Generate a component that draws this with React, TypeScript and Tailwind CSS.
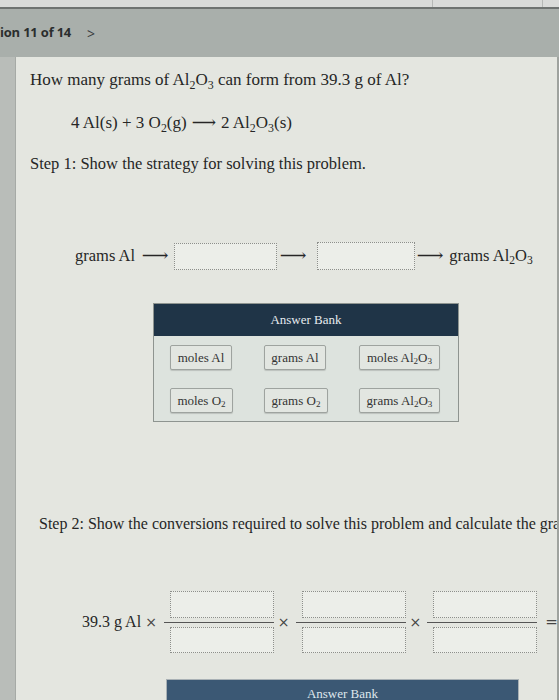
import React from 'react';

const serif = "font-['Liberation_Serif','Times_New_Roman','DejaVu_Serif',serif]";

const Sub = ({ children }: { children: React.ReactNode }) => (
  <sub className="text-[0.7em] relative top-[0.3em] bottom-auto align-baseline leading-none">{children}</sub>
);

const Arrow = ({ className = '' }: { className?: string }) => (
  <span className={`inline-block font-['DejaVu_Serif',serif] text-[17px] ${className}`}>⟶</span>
);

const DropBox = ({ className = '' }: { className?: string }) => (
  <div className={`flex-shrink-0 border border-dotted border-[#8d8f8b] bg-[#eceee9] ${className}`} />
);

const Chip = ({ children, className = '' }: { children: React.ReactNode; className?: string }) => (
  <div
    className={`h-[25px] flex items-center justify-center border border-[#9ea39f] rounded-[2px] bg-[#e2e6e1] shadow-[0_1px_1px_rgba(0,0,0,0.15)] text-[13px] text-[#333] whitespace-nowrap ${className}`}
  >
    <span>{children}</span>
  </div>
);

const Fraction = () => (
  <div className="w-[110px] flex-shrink-0 flex flex-col items-center">
    <DropBox className="w-[104px] h-[27px] ml-[6px]" />
    <div className="w-full h-[1.5px] bg-[#555] my-[4px]" />
    <DropBox className="w-[104px] h-[26px] ml-[6px]" />
  </div>
);

const Times = ({ className = '' }: { className?: string }) => (
  <span className={`flex-shrink-0 font-['DejaVu_Sans',sans-serif] text-[14px] text-[#444] ${className}`}>×</span>
);

export default function App() {
  return (
    <div className="w-[559px] h-[700px] overflow-hidden flex flex-col bg-[#c4c8c4]">
      {/* top strip */}
      <div className="h-[9px] flex-shrink-0 bg-[#d9dbd9] border-b-2 border-[#6e7371] flex">
        <div className="w-[433px] border-r border-[#b5b8b6]" />
        <div className="w-[110px] border-r border-[#b5b8b6]" />
      </div>

      {/* header */}
      <div className="h-[48px] flex-shrink-0 bg-[#a9afab] flex items-center font-['Open_Sans',sans-serif] text-[#2b2e2e]">
        <span className="text-[13px] font-bold tracking-[-0.2px] pb-[1px]">ion 11 of 14</span>
        <span className="ml-[16px] text-[14px] text-[#3a3d3d]">&gt;</span>
      </div>

      <div className="flex-1 flex min-h-0">
        <div className="w-[16px] flex-shrink-0 bg-[#b9bdb9] border-r border-[#a6aaa6]" />
        <div className={`flex-1 min-w-0 bg-[#e4e6e0] border-r-2 border-[#9ea29e] ${serif} text-[#262626] overflow-hidden`}>
          <div className="pl-[14px] pt-[11px]">
            <p className="text-[17px] leading-[24px]">
              How many grams of Al<Sub>2</Sub>O<Sub>3</Sub> can form from 39.3 g of Al?
            </p>
            <p className="ml-[41px] mt-[18px] text-[17px] leading-[24px]">
              4 Al(s) + 3 O<Sub>2</Sub>(g)
              <Arrow className="mx-[5px]" />2 Al<Sub>2</Sub>O<Sub>3</Sub>(s)
            </p>
            <p className="mt-[17px] text-[16.5px] leading-[24px]">Step 1: Show the strategy for solving this problem.</p>
          </div>

          {/* strategy row */}
          <div className="mt-[66px] flex items-center text-[16.5px] h-[28px] whitespace-nowrap">
            <span className="ml-[59px]">grams Al</span>
            <Arrow className="ml-[8px] scale-x-[1.1]" />
            <DropBox className="w-[103px] h-[27px] ml-[7px]" />
            <Arrow className="ml-[4px] scale-x-[1.1]" />
            <DropBox className="w-[98px] h-[28px] ml-[11px]" />
            <Arrow className="ml-[3px] scale-x-[1.1]" />
            <span className="ml-[7px]">
              grams Al<Sub>2</Sub>O<Sub>3</Sub>
            </span>
          </div>

          {/* answer bank */}
          <div className="ml-[137px] mt-[33px] w-[306px] border border-[#8e9490] bg-[#dde3de]">
            <div className="h-[32px] bg-[#1f3447] text-[#e6ebef] text-[13px] flex items-center justify-center">
              Answer Bank
            </div>
            <div className="grid grid-cols-[94px_95px_1fr] gap-y-[18px] pl-[16px] pt-[9px] pb-[8px]">
              <Chip className="w-[62px]">moles Al</Chip>
              <Chip className="w-[62px]">grams Al</Chip>
              <Chip className="w-[81px]">
                moles Al<Sub>2</Sub>O<Sub>3</Sub>
              </Chip>
              <Chip className="w-[63px]">
                moles O<Sub>2</Sub>
              </Chip>
              <Chip className="w-[64px]">
                grams O<Sub>2</Sub>
              </Chip>
              <Chip className="w-[81px]">
                grams Al<Sub>2</Sub>O<Sub>3</Sub>
              </Chip>
            </div>
          </div>

          <p className="mt-[90px] ml-[23px] text-[16px] leading-[24px] whitespace-nowrap">
            Step 2: Show the conversions required to solve this problem and calculate the grams of Al<Sub>2</Sub>O<Sub>3</Sub>.
          </p>

          {/* conversion row */}
          <div className="mt-[55px] flex items-center h-[62px] whitespace-nowrap">
            <span className="ml-[66px] flex-shrink-0 text-[16px]">39.3 g Al</span>
            <Times className="ml-[4px] mr-[7px]" />
            <Fraction />
            <Times className="ml-[4px] mr-[6px]" />
            <Fraction />
            <Times className="ml-[4px] mr-[6px]" />
            <Fraction />
            <span className="ml-[8px] flex-shrink-0 font-['DejaVu_Sans',sans-serif] text-[15px] text-[#444]">=</span>
          </div>

          {/* second answer bank */}
          <div className="mt-[26px] ml-[150px] w-[353px] h-[30px] bg-[#3b5874] border border-[#a9b1b5] text-[#dfe6ec] text-[13px] flex items-center justify-center">
            Answer Bank
          </div>
        </div>
      </div>
    </div>
  );
}
